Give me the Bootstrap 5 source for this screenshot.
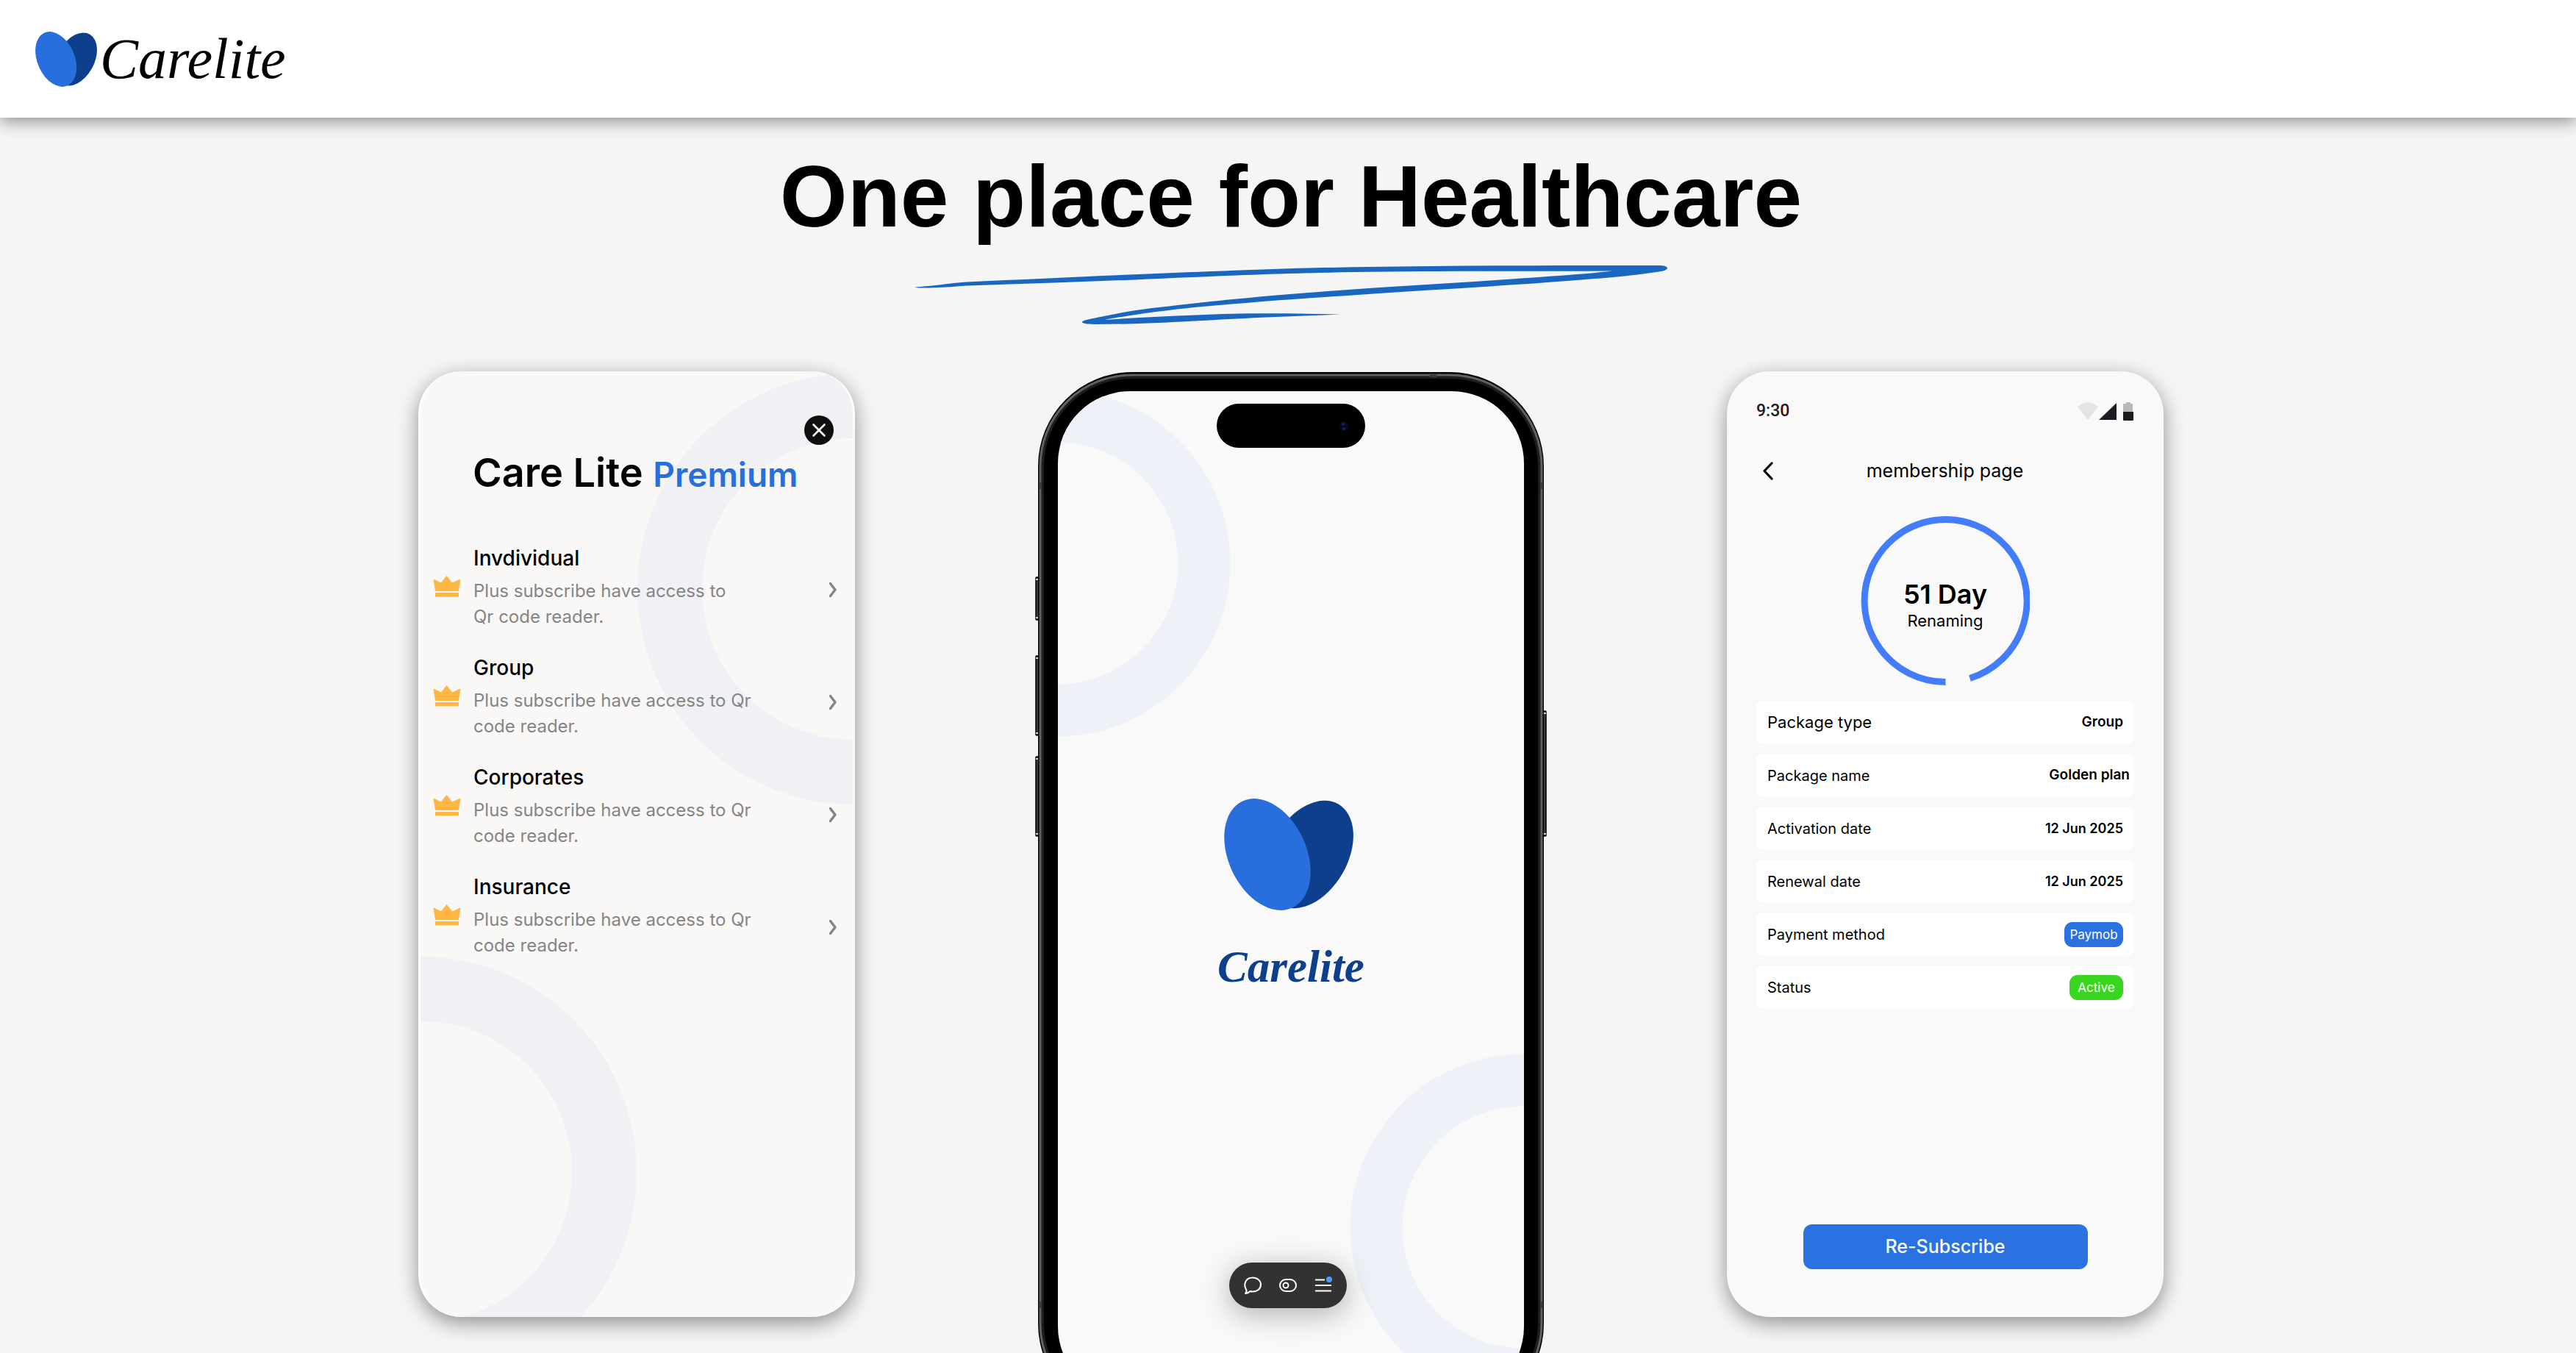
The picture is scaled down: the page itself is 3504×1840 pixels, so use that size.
<!DOCTYPE html>
<html lang="en">
<head>
<meta charset="utf-8">
<meta name="viewport" content="width=device-width, initial-scale=1">
<title>Carelite</title>
<link href="https://cdn.jsdelivr.net/npm/bootstrap@5.3.0/dist/css/bootstrap.min.css" rel="stylesheet">
<style>
  body { background: #f5f5f5; color: #000; font-family: Inter, "Open Sans", sans-serif; }
  a { text-decoration: none; color: inherit; }
  .site-header { height: 160px; box-shadow: 0 6px 20px rgba(0,0,0,.4); z-index: 2; }
  .brand-word { font: italic 78px/84px "Liberation Serif", serif; }
  .hero { padding-left: 8px; }
  .hero h1 { font: bold 118px/120px "Liberation Sans", Arial, sans-serif; margin: 47px 0 34px; }
  .showcase { max-width: 2670px; margin-top: 64px; }
  .screen-card { max-width: 594px; height: 1286px; border-radius: 58px; overflow: hidden; box-shadow: 0 8px 28px rgba(0,0,0,.42); }
  .premium { background: #f9f8f6; border: solid #fff; border-width: 0 3px; }
  .backdrop { position: absolute; inset: 0; width: 100%; height: 100%; }
  .close-btn { width: 40px; height: 40px; }
  .premium-top { padding: 60px 26px 0; }
  .premium h2 { font-size: 54px; line-height: 60px; font-weight: 600; margin: 8px 0 0 71px; }
  .premium h2 span { font-size: 46px; color: #286edc; }
  .plan-list { margin-top: 63px; padding-left: 17px; }
  .plan { height: 149px; gap: 17px; }
  .plan svg { margin-top: 45px; }
  .plan-text { padding-top: 3px; }
  .plan h3 { font-size: 28px; line-height: 36px; font-weight: 500; margin: 0 0 9px; }
  .plan p { font-size: 24px; line-height: 35px; color: #858585; margin: 0; }
  .chevrons { margin: 53px 21px 62px auto; }
  .phone { width: 696px; height: 1423px; }
  .phone-body { padding-top: 581px; }
  .phone-heart { margin: 0 262px 0 257px; }
  .phone-word { font: italic bold 61px/70px "Liberation Serif", serif; color: #0d3f8c; margin-top: 42px; }
  .member { background: #f9f9f9; padding: 41px 40px 65px; }
  .status-bar { font: 500 23px/26px Roboto, sans-serif; color: #1d1b20; height: 26px; }
  .member h2 { font-size: 25px; line-height: 30px; font-weight: 400; }
  .title-row { margin-top: 53px; padding: 0 8px; height: 30px; }
  .dial { width: 230px; height: 230px; margin-top: 47px; }
  .dial strong { font-size: 36px; line-height: 44px; font-weight: 600; margin-top: 10px; }
  .dial span { font-size: 22px; line-height: 28px; }
  .facts { margin: 22px 0 0; gap: 15px; }
  .fact { height: 57px; padding: 0 15px; border-radius: 6px; background: #fff; font-size: 20px; }
  .fact dt { font-weight: 400; }
  .fact dd { margin: 0; font-size: 18px; font-weight: 600; }
  .fact-lg dt { font-size: 22px; }
  .fact-wide { padding-right: 6px; }
  .fact-lg dd, .fact-wide dd { font-size: 19px; }
  .fact .tag { height: 34px; line-height: 34px; border-radius: 11px; color: #fff; font-size: 17px; font-weight: 400; text-align: center; }
  .tag-pay { width: 80px; background: #2a72e1; }
  .tag-on { width: 73px; background: #38d61e; }
  .resub { width: 387px; height: 61px; border-radius: 12px; background: #2a72e1; color: #fff; font-size: 25px; font-weight: 500; border: 0; }
  .dock { bottom: 61px; left: 50%; margin-left: -80px; width: 160px; height: 62px; border-radius: 31px; background: #323232; box-shadow: 0 8px 40px rgba(0,0,0,.3); gap: 24px; z-index: 5; }
  .bare { background: none; border: 0; padding: 0; display: block; line-height: 0; }
</style>
<script src="https://cdn.jsdelivr.net/npm/bootstrap@5.3.0/dist/js/bootstrap.bundle.min.js"></script>
</head>
<body class="vh-100 overflow-hidden">

<svg width="0" height="0" class="position-absolute" aria-hidden="true">
  <symbol id="heart" viewBox="0 0 176 152" preserveAspectRatio="none">
    <ellipse cx="116" cy="76" rx="52" ry="79" fill="#0d3f8c" transform="rotate(30 116 76)"/>
    <ellipse cx="59" cy="76" rx="53" ry="80" fill="#286edc" transform="rotate(-25 59 76)"/>
  </symbol>
  <symbol id="crown" viewBox="0 0 38 29">
    <path d="M1 5 11 10 18.500 0.500 26 10 37 5 34.500 20.500H3.500Z" fill="#ffb744" stroke="#ffb744" stroke-linejoin="round"/>
    <rect x="3" y="23" width="32" height="5.500" rx="1" fill="#ffb744"/>
  </symbol>
  <symbol id="chev" viewBox="0 0 12 22">
    <path d="M2.500 2.500 9 11 2.500 19.500" fill="none" stroke="#858585" stroke-width="3.500" stroke-linecap="round" stroke-linejoin="round"/>
  </symbol>
</svg>

<header class="site-header navbar bg-white position-relative p-0 ps-5">
  <a href="#" class="d-flex align-items-center">
    <svg width="84" height="75" aria-hidden="true"><use href="#heart"/></svg>
    <span class="brand-word ps-1">Carelite</span>
  </a>
</header>

<main class="hero">
  <div class="text-center">
    <h1>One place for Healthcare</h1>
    <svg width="1024" height="80" viewBox="0 0 1024 80" class="d-block mx-auto" fill="#1967c1" aria-hidden="true">
      <path d="M0 29.500C30 28 45 24 71 22.500 190 17 320 11 420 7.500 520 3 600 2 700 1 800 0 900 0 1015 0 1026 1 1027 5 1018 7.500 980 14 940 17 888 21 800 28 700 33 603 40 540 44 480 48 438 52 360 58 300 66 259 74 300 71 340 69 383 67.500 440 64.500 510 65 579 66.500 530 68.500 480 70 438 72.500 370 76 310 80 245 80 224 80 224 76 236 73.500 270 66 300 60 346 55.500 410 48 460 43 530 37.500 620 30 710 26 805 19 860 15 910 12 950 7.500 820 8 700 7.500 594 9 540 10 480 12 438 13.500 350 17 270 21 190 23.500 150 25 110 26 71 27.500 50 29 30 31 5 30.500Z"/>
    </svg>
  </div>

  <div class="row g-0 showcase mx-auto">
    <section class="col-4 d-flex justify-content-center">
      <div class="screen-card premium position-relative w-100">
        <svg class="backdrop" viewBox="0 0 588 1286" fill="none" stroke="#eff1f5" stroke-width="88" aria-hidden="true">
          <circle cx="588" cy="296" r="249"/><circle cx="1" cy="1089" r="249"/>
        </svg>
        <div class="position-relative">
          <div class="premium-top d-flex justify-content-end">
            <button class="bare close-btn" aria-label="Close">
              <svg width="40" height="40" viewBox="0 0 40 40"><circle cx="20" cy="20" r="20" fill="#0f0f0f"/><path d="M12.500 12.500 27.500 27.500M27.500 12.500 12.500 27.500" stroke="#fff" stroke-width="2.600" stroke-linecap="round"/></svg>
            </button>
          </div>
          <h2>Care Lite <span>Premium</span></h2>
          <div class="d-flex plan-list">
            <div>
              <article class="plan d-flex align-items-start"><svg width="38" height="29" aria-hidden="true"><use href="#crown"/></svg><div class="plan-text"><h3>Invdividual</h3><p>Plus subscribe have access to<br>Qr code reader.</p></div></article>
              <article class="plan d-flex align-items-start"><svg width="38" height="29" aria-hidden="true"><use href="#crown"/></svg><div class="plan-text"><h3>Group</h3><p>Plus subscribe have access to Qr<br>code reader.</p></div></article>
              <article class="plan d-flex align-items-start"><svg width="38" height="29" aria-hidden="true"><use href="#crown"/></svg><div class="plan-text"><h3>Corporates</h3><p>Plus subscribe have access to Qr<br>code reader.</p></div></article>
              <article class="plan d-flex align-items-start"><svg width="38" height="29" aria-hidden="true"><use href="#crown"/></svg><div class="plan-text"><h3>Insurance</h3><p>Plus subscribe have access to Qr<br>code reader.</p></div></article>
            </div>
            <div class="chevrons d-flex flex-column justify-content-between">
              <button class="bare" aria-label="Open Invdividual"><svg width="12" height="22"><use href="#chev"/></svg></button>
              <button class="bare" aria-label="Open Group"><svg width="12" height="22"><use href="#chev"/></svg></button>
              <button class="bare" aria-label="Open Corporates"><svg width="12" height="22"><use href="#chev"/></svg></button>
              <button class="bare" aria-label="Open Insurance"><svg width="12" height="22"><use href="#chev"/></svg></button>
            </div>
          </div>
        </div>
      </div>
    </section>

    <section class="col-4 d-flex justify-content-center">
      <div class="phone position-relative flex-shrink-0">
        <svg class="backdrop" viewBox="0 0 696 1423" aria-hidden="true">
          <defs><clipPath id="glass"><rect x="31" y="27" width="634" height="1370" rx="98"/></clipPath></defs>
          <g fill="#3a3d3f" stroke="#000" stroke-width="1.500">
            <rect x="1" y="280" width="6" height="58" rx="1"/><rect x="1" y="387" width="6" height="108" rx="1"/><rect x="1" y="524" width="6" height="108" rx="1"/><rect x="689" y="462" width="6" height="170" rx="1"/>
          </g>
          <g fill="#c9cccc">
            <rect x="1" y="282" width="3" height="2"/><rect x="1" y="334" width="3" height="2"/><rect x="1" y="389" width="3" height="2"/><rect x="1" y="491" width="3" height="2"/><rect x="1" y="526" width="3" height="2"/><rect x="1" y="628" width="3" height="2"/><rect x="692" y="464" width="3" height="2"/><rect x="692" y="628" width="3" height="2"/>
          </g>
          <rect x="4" y="1" width="688" height="1422" rx="128"/>
          <rect x="9" y="7" width="678" height="1410" rx="122" fill="none" stroke="#1c1f20" stroke-width="6"/>
          <rect x="7" y="5" width="682" height="1414" rx="124" fill="none" stroke="#5e6263" stroke-width="3"/>
          <g fill="#3c3c3c"><rect x="537" y="3" width="9" height="5"/><rect x="5" y="151" width="4" height="9"/><rect x="687" y="151" width="4" height="9"/><rect x="5" y="1265" width="4" height="9"/><rect x="687" y="1265" width="4" height="9"/></g>
          <g clip-path="url(#glass)">
            <rect x="31" y="27" width="634" height="1370" fill="#f9f9f9"/>
            <g fill="none" stroke="#eef2f8" stroke-width="71"><circle cx="30" cy="261" r="200"/><circle cx="664" cy="1164" r="200"/></g>
          </g>
          <rect x="247" y="44" width="202" height="60" rx="30"/>
          <circle cx="419.500" cy="74.500" r="6.500" fill="#080720"/><circle cx="419" cy="72" r="2" fill="#23205c"/><circle cx="420" cy="78" r="2" fill="#0b2a5a"/>
        </svg>
        <div class="phone-body position-relative text-center">
          <svg width="176" height="152" class="d-block phone-heart" aria-hidden="true"><use href="#heart"/></svg>
          <div class="phone-word">Carelite</div>
        </div>
      </div>
    </section>

    <section class="col-4 d-flex justify-content-center">
      <div class="screen-card member w-100 d-flex flex-column">
        <div class="status-bar d-flex justify-content-between">
          <span>9:30</span>
          <svg width="78" height="26" viewBox="0 0 78 26" aria-hidden="true">
            <path d="M1 7.500C9 -.5 21 -.5 29 7.500L15 25Z" fill="#e4e4e4"/>
            <path d="M54 2V25H30Z" fill="#1d1b20"/>
            <path d="M67 1H73V3H76V14H63V3H67Z" fill="#b9b9ba"/><path d="M63 14H77V24.500Q77 26 75.500 26H64.500Q63 26 63 24.500Z" fill="#1d1b20"/>
          </svg>
        </div>
        <div class="title-row d-flex align-items-center">
          <button class="bare" aria-label="Back"><svg width="15" height="25" viewBox="0 0 15 25"><path d="M13 2 3 12.500 13 23" fill="none" stroke="#000" stroke-width="3.200" stroke-linecap="round" stroke-linejoin="round"/></svg></button>
          <h2 class="flex-grow-1 text-center m-0 pe-3">membership page</h2>
        </div>
        <div class="dial mx-auto position-relative flex-shrink-0 d-flex flex-column align-items-center justify-content-center">
          <svg class="backdrop" viewBox="0 0 230 230" aria-hidden="true"><path d="M115.500 225.500A110.500 110.500 0 1 1 148.500 220.500" fill="none" stroke="#437dfc" stroke-width="9"/></svg>
          <strong>51 Day</strong>
          <span>Renaming</span>
        </div>
        <dl class="facts d-flex flex-column">
          <div class="fact fact-lg d-flex align-items-center justify-content-between"><dt>Package type</dt><dd>Group</dd></div>
          <div class="fact fact-wide d-flex align-items-center justify-content-between"><dt>Package name</dt><dd>Golden plan</dd></div>
          <div class="fact d-flex align-items-center justify-content-between"><dt>Activation date</dt><dd>12 Jun 2025</dd></div>
          <div class="fact d-flex align-items-center justify-content-between"><dt>Renewal date</dt><dd>12 Jun 2025</dd></div>
          <div class="fact d-flex align-items-center justify-content-between"><dt>Payment method</dt><dd class="tag tag-pay">Paymob</dd></div>
          <div class="fact d-flex align-items-center justify-content-between"><dt>Status</dt><dd class="tag tag-on">Active</dd></div>
        </dl>
        <button class="resub mt-auto mx-auto">Re-Subscribe</button>
      </div>
    </section>
  </div>
</main>

<div class="dock position-fixed d-flex align-items-center justify-content-center">
  <button class="bare" aria-label="Comments"><svg width="24" height="24" viewBox="0 0 24 24" fill="none" stroke="#fff" stroke-width="2"><path d="M2 23C3.500 21.500 3.800 19.500 3.200 18 -1 11 2 1.500 12 1.500 18.500 1.500 23 6 23 11 23 17 18 20.500 12 20.500 10.500 20.500 9.500 20.300 8.500 20 7 21.800 5 22.800 2 23Z" stroke-linejoin="round"/></svg></button>
  <button class="bare" aria-label="Toggle"><svg width="24" height="24" viewBox="0 0 24 24" fill="none" stroke="#fff" stroke-width="2"><rect x="1" y="4" width="22" height="16" rx="8"/><circle cx="9" cy="12" r="3.500"/></svg></button>
  <button class="bare" aria-label="Menu"><svg width="24" height="24" viewBox="0 0 24 24"><path d="M1 4.500H14M1 12H23M1 19.500H23" stroke="#fff" stroke-width="2"/><circle cx="20" cy="4" r="4" fill="#4b9ef8"/></svg></button>
</div>
</body>
</html>
